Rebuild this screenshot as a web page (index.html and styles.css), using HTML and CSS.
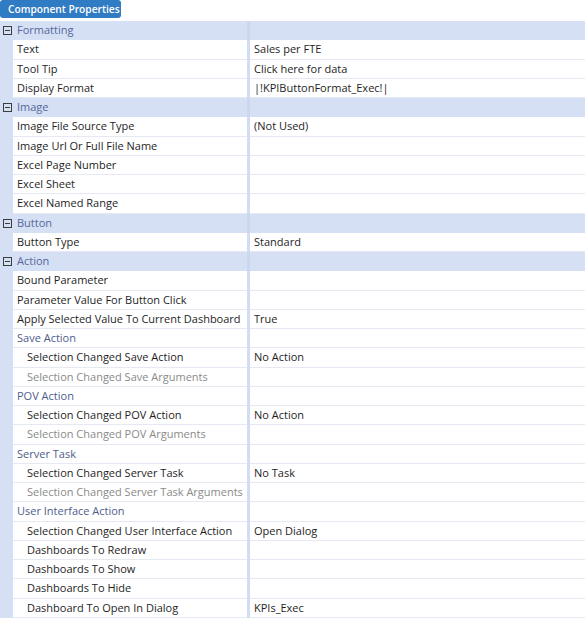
FILE: index.html
```html
<!DOCTYPE html>
<html>
<head>
<meta charset="utf-8">
<link rel="stylesheet" href="styles.css">
</head>
<body>
<div class="panel">
  <div class="tabbar"><span class="tab">Component Properties</span></div>
  <div class="grid">
    <div class="row cat"><span class="gut"><span class="toggle"></span></span><span class="name">Formatting</span><span class="split"></span><span class="val"></span></div>
    <div class="row"><span class="gut"></span><span class="name">Text</span><span class="split"></span><span class="val">Sales per FTE</span></div>
    <div class="row"><span class="gut"></span><span class="name">Tool Tip</span><span class="split"></span><span class="val">Click here for data</span></div>
    <div class="row"><span class="gut"></span><span class="name">Display Format</span><span class="split"></span><span class="val">|!KPIButtonFormat_Exec!|</span></div>

    <div class="row cat"><span class="gut"><span class="toggle"></span></span><span class="name">Image</span><span class="split"></span><span class="val"></span></div>
    <div class="row"><span class="gut"></span><span class="name">Image File Source Type</span><span class="split"></span><span class="val">(Not Used)</span></div>
    <div class="row"><span class="gut"></span><span class="name">Image Url Or Full File Name</span><span class="split"></span><span class="val"></span></div>
    <div class="row"><span class="gut"></span><span class="name">Excel Page Number</span><span class="split"></span><span class="val"></span></div>
    <div class="row"><span class="gut"></span><span class="name">Excel Sheet</span><span class="split"></span><span class="val"></span></div>
    <div class="row"><span class="gut"></span><span class="name">Excel Named Range</span><span class="split"></span><span class="val"></span></div>

    <div class="row cat"><span class="gut"><span class="toggle"></span></span><span class="name">Button</span><span class="split"></span><span class="val"></span></div>
    <div class="row"><span class="gut"></span><span class="name">Button Type</span><span class="split"></span><span class="val">Standard</span></div>

    <div class="row cat"><span class="gut"><span class="toggle"></span></span><span class="name">Action</span><span class="split"></span><span class="val"></span></div>
    <div class="row"><span class="gut"></span><span class="name">Bound Parameter</span><span class="split"></span><span class="val"></span></div>
    <div class="row"><span class="gut"></span><span class="name">Parameter Value For Button Click</span><span class="split"></span><span class="val"></span></div>
    <div class="row"><span class="gut"></span><span class="name">Apply Selected Value To Current Dashboard</span><span class="split"></span><span class="val">True</span></div>

    <div class="row sub"><span class="gut"></span><span class="name">Save Action</span><span class="split"></span><span class="val"></span></div>
    <div class="row"><span class="gut"></span><span class="name ind">Selection Changed Save Action</span><span class="split"></span><span class="val">No Action</span></div>
    <div class="row off"><span class="gut"></span><span class="name ind">Selection Changed Save Arguments</span><span class="split"></span><span class="val"></span></div>

    <div class="row sub"><span class="gut"></span><span class="name">POV Action</span><span class="split"></span><span class="val"></span></div>
    <div class="row"><span class="gut"></span><span class="name ind">Selection Changed POV Action</span><span class="split"></span><span class="val">No Action</span></div>
    <div class="row off"><span class="gut"></span><span class="name ind">Selection Changed POV Arguments</span><span class="split"></span><span class="val"></span></div>

    <div class="row sub"><span class="gut"></span><span class="name">Server Task</span><span class="split"></span><span class="val"></span></div>
    <div class="row"><span class="gut"></span><span class="name ind">Selection Changed Server Task</span><span class="split"></span><span class="val">No Task</span></div>
    <div class="row off"><span class="gut"></span><span class="name ind">Selection Changed Server Task Arguments</span><span class="split"></span><span class="val"></span></div>

    <div class="row sub"><span class="gut"></span><span class="name">User Interface Action</span><span class="split"></span><span class="val"></span></div>
    <div class="row"><span class="gut"></span><span class="name ind">Selection Changed User Interface Action</span><span class="split"></span><span class="val">Open Dialog</span></div>
    <div class="row"><span class="gut"></span><span class="name ind">Dashboards To Redraw</span><span class="split"></span><span class="val"></span></div>
    <div class="row"><span class="gut"></span><span class="name ind">Dashboards To Show</span><span class="split"></span><span class="val"></span></div>
    <div class="row"><span class="gut"></span><span class="name ind">Dashboards To Hide</span><span class="split"></span><span class="val"></span></div>
    <div class="row"><span class="gut"></span><span class="name ind">Dashboard To Open In Dialog</span><span class="split"></span><span class="val">KPIs_Exec</span></div>
  </div>
</div>
</body>
</html>
```
FILE: styles.css
```css
html, body {
  margin: 0;
  padding: 0;
  background: #ffffff;
}

.panel {
  width: 585px;
  font-family: "Open Sans", "Noto Sans", sans-serif;
  font-size: 11px;
  color: #1e1e1e;
}

.tabbar {
  display: flex;
  height: 21px;
  align-items: flex-start;
}

.tab {
  display: flex;
  align-items: center;
  height: 18px;
  width: 121px;
  box-sizing: border-box;
  padding-left: 8px;
  background: #2f7cc4;
  color: #ffffff;
  font-size: 10.2px;
  font-weight: 600;
  white-space: nowrap;
  border-radius: 3px;
}

.grid {
  display: flex;
  flex-direction: column;
}

.row {
  display: flex;
  height: 19.25px;
  line-height: 17.5px;
}

.gut {
  width: 13px;
  flex: none;
  background: #d5e0f5;
  display: flex;
  align-items: center;
  justify-content: center;
}

.name {
  width: 234px;
  flex: none;
  box-sizing: border-box;
  padding-left: 4px;
  border-bottom: 1px solid #e4e9f2;
  white-space: nowrap;
  overflow: hidden;
}

.name.ind {
  padding-left: 14px;
}

.split {
  width: 3px;
  flex: none;
  background: #d2ddf3;
}

.val {
  flex: 1;
  box-sizing: border-box;
  padding-left: 4px;
  border-bottom: 1px solid #e4e9f2;
  white-space: nowrap;
}

/* category header rows */
.cat .name,
.cat .val {
  background: #d5e0f5;
  border-bottom-color: #d5e0f5;
  color: #56679a;
}

.cat .split {
  background: #cbd7ef;
}

.toggle {
  position: relative;
  width: 7px;
  height: 7px;
  border: 1px solid #3c3c3c;
  margin-left: 1px;
}

.toggle::after {
  content: "";
  position: absolute;
  left: 1px;
  right: 1px;
  top: 3px;
  height: 1px;
  background: #3c3c3c;
}

/* sub-group rows */
.sub .name {
  color: #4d5d8c;
}

/* read-only rows */
.off .name {
  color: #8a8a8a;
}
```
